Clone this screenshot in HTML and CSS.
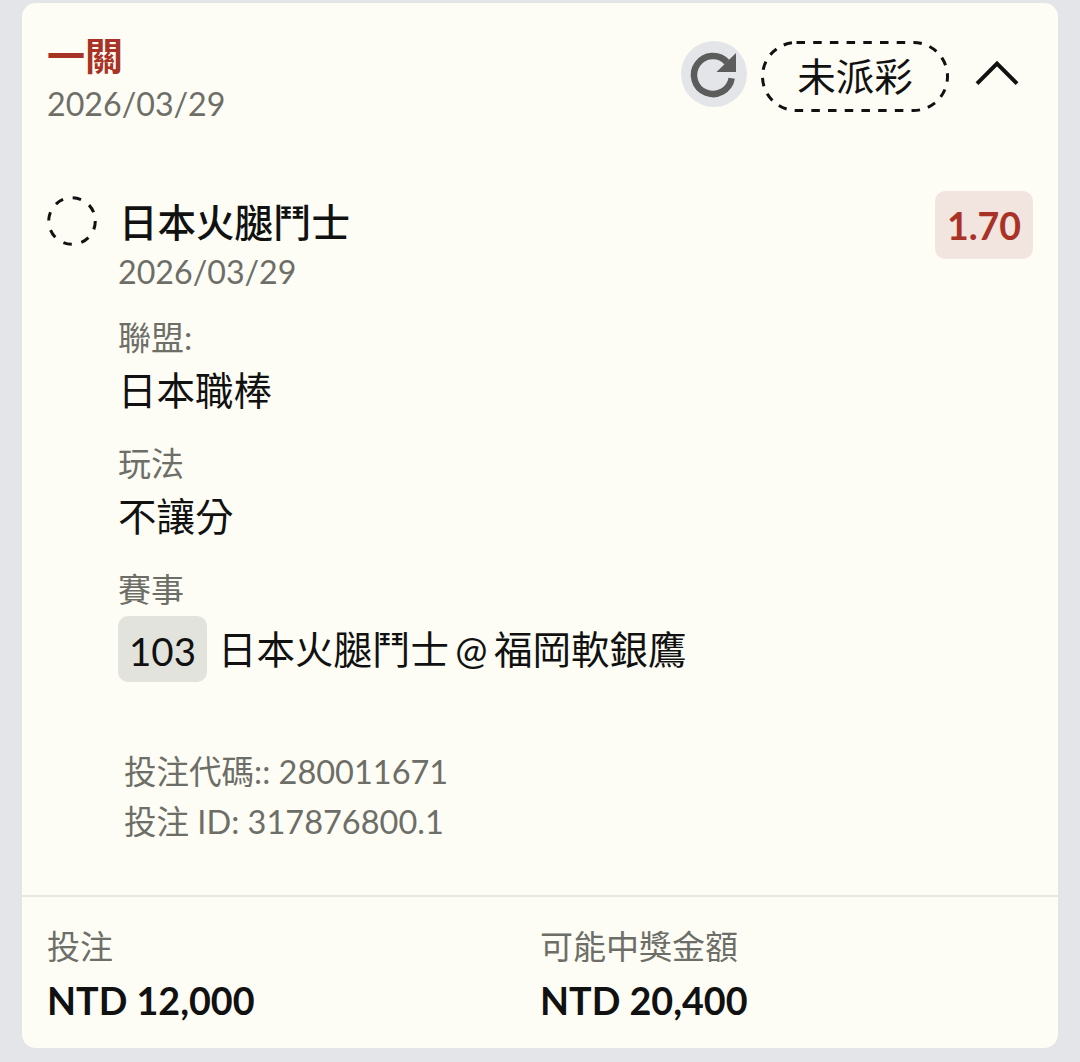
FILE: index.html
```html
<!DOCTYPE html>
<html lang="zh-Hant">
<head>
<meta charset="utf-8">
<title>Bet</title>
<link rel="stylesheet" href="styles.css">
</head>
<body>
<main class="card">
  <header class="head">
    <div class="head-text">
      <div class="title">一關</div>
      <div class="date">2026/03/29</div>
    </div>
    <div class="head-actions">
      <button class="refresh" aria-label="refresh">
        <svg width="46" height="46" viewBox="0 0 46 46"><path class="refresh-arc" d="M40.7 27.3A19 19 0 1 1 36 11.2"/><path class="refresh-head" d="M45 2V21H25.5Z"/></svg>
      </button>
      <div class="status">
        <svg class="status-border" width="188" height="71" viewBox="0 0 188 71"><rect x="1.5" y="1.5" width="185" height="68" rx="34"/></svg>
        未派彩
      </div>
      <svg class="chevron" width="46" height="30" viewBox="0 0 46 30"><path d="M3 26.7 23 6.5 43 26.7"/></svg>
    </div>
  </header>
  <section class="leg">
    <div class="leg-top">
      <div class="circle"><svg width="50" height="50" viewBox="0 0 50 50"><circle cx="25" cy="25" r="23.3"/></svg></div>
      <div class="team">日本火腿鬥士</div>
      <div class="odds">1.70</div>
    </div>
    <div class="details">
      <div class="date">2026/03/29</div>
      <div class="label first">聯盟:</div>
      <div class="value">日本職棒</div>
      <div class="label">玩法</div>
      <div class="value">不讓分</div>
      <div class="label">賽事</div>
      <div class="match"><span class="num">103</span><span class="value match-name">日本火腿鬥士 @ 福岡軟銀鷹</span></div>
    </div>
    <div class="codes">
      <div>投注代碼:: 280011671</div>
      <div>投注 ID: 317876800.1</div>
    </div>
  </section>
  <footer class="foot">
    <div class="col">
      <div class="label">投注</div>
      <div class="amount">NTD 12,000</div>
    </div>
    <div class="col">
      <div class="label">可能中獎金額</div>
      <div class="amount">NTD 20,400</div>
    </div>
  </footer>
</main>
</body>
</html>
```
FILE: styles.css
```css
* { box-sizing: border-box; }
html, body { margin: 0; height: 100%; }
body {
  background: #e3e5e8;
  padding: 3px 22px 14px;
  font-family: Lato, "Noto Sans CJK TC", sans-serif;
  color: #111;
  overflow: hidden;
}
.card {
  height: 1045px;
  background: #fdfdf5;
  border-radius: 14px;
  display: flex;
  flex-direction: column;
}
.head {
  display: flex;
  justify-content: space-between;
  padding: 31px 38px 0 25px;
  height: 170px;
}
.title {
  font-size: 38px;
  line-height: 42px;
  margin-bottom: 3px;
  font-weight: 700;
  color: #a93226;
}
.date {
  font-size: 32.2px;
  line-height: 50px;
  color: #6e6e68;
}
.head-actions {
  display: flex;
  align-items: flex-start;
  padding-top: 7px;
}
.refresh {
  width: 66px;
  height: 66px;
  border: 0;
  padding: 10px;
  border-radius: 50%;
  background: #e3e5e8;
  margin-right: 14px;
}
.refresh svg { display: block; overflow: visible; }
.refresh-arc { fill: none; stroke: #5c5c5c; stroke-width: 6.5px; }
.refresh-head { fill: #5c5c5c; }
.status {
  position: relative;
  width: 188px;
  height: 71px;
  font-size: 38.5px;
  line-height: 70px;
  text-align: center;
  margin-right: 25px;
}
.status-border { position: absolute; left: 0; top: 0; }
.status-border rect { fill: none; stroke: #111; stroke-width: 3px; stroke-dasharray: 8.5 8.2; }
.chevron { margin-top: 16px; }
.chevron path { fill: none; stroke: #111; stroke-width: 4px; }
.leg { padding: 0 25px; flex: 1; }
.leg-top {
  display: flex;
  align-items: flex-start;
  height: 70px;
  margin-top: 18px;
}
.circle { margin-top: 5px; margin-right: 22px; height: 50px; }
.circle circle { fill: none; stroke: #111; stroke-width: 3px; stroke-dasharray: 8.5 9.8; }
.team { font-size: 38.5px; line-height: 62px; flex: 1; font-weight: 500; }
.odds {
  width: 98px;
  height: 68px;
  background: #f2e4df;
  border-radius: 10px;
  font-size: 37.5px;
  font-weight: 700;
  line-height: 70px;
  text-align: center;
  color: #a93226;
}
.details { padding-left: 71px; margin-top: -14px; }
.label {
  font-size: 33px;
  line-height: 42px;
  margin-top: 20px;
  color: #6e6e68;
}
.label.first { margin-top: 19px; }
.value { font-size: 38.5px; line-height: 64px; }
.match { display: flex; align-items: center; gap: 11px; margin-top: 6px; }
.match-name { word-spacing: -3.5px; }
.num {
  width: 89px;
  height: 66px;
  background: #e3e3dd;
  border-radius: 10px;
  font-size: 38.5px;
  line-height: 70px;
  text-align: center;
}
.codes {
  padding-left: 77px;
  margin-top: 65px;
  font-size: 32.5px;
  line-height: 50px;
  color: #6e6e68;
}
.foot {
  display: grid;
  grid-template-columns: 493px 1fr;
  height: 153px;
  padding: 27px 25px 0;
  border-top: 2px solid #e8e8e1;
}
.foot .label { margin: 0; line-height: 44px; }
.amount { font-size: 37.7px; line-height: 66px; font-weight: 700; color: #111; }
```
